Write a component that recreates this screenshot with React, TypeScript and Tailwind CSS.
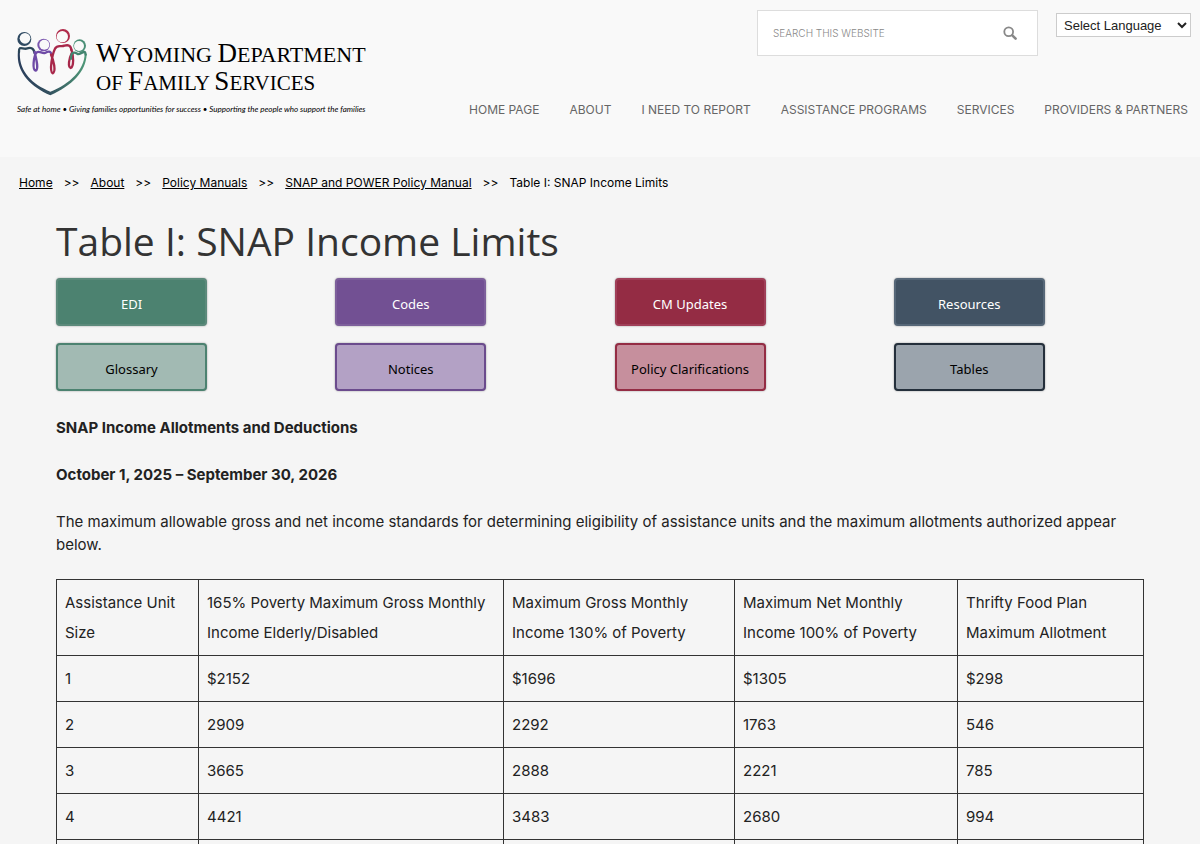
const navLinks = [
  "Home Page",
  "About",
  "I Need To Report",
  "Assistance Programs",
  "Services",
  "Providers & Partners",
];

const breadcrumbs = ["Home", "About", "Policy Manuals", "SNAP and POWER Policy Manual"];

const policyLinks = [
  { label: "EDI", style: "border-[#5c8a7b] bg-[#4c8270] text-white" },
  { label: "Codes", style: "border-[#7d5f9b] bg-[#725093] text-white" },
  { label: "CM Updates", style: "border-[#a03f58] bg-[#942c44] text-white" },
  { label: "Resources", style: "border-[#566778] bg-[#425364] text-white" },
  { label: "Glossary", style: "border-[#4c8270] bg-[#a2bab3] text-black" },
  { label: "Notices", style: "border-[#6b4b8d] bg-[#b3a1c5] text-black" },
  { label: "Policy Clarifications", style: "border-[#942c44] bg-[#c68f9d] text-black" },
  { label: "Tables", style: "border-[#242f3b] bg-[#9ba4ad] text-black" },
];

const columns = [
  { label: "Assistance Unit Size", width: "w-[142px]" },
  { label: "165% Poverty Maximum Gross Monthly Income Elderly/Disabled", width: "w-[305px]" },
  { label: "Maximum Gross Monthly Income 130% of Poverty", width: "w-[231px]" },
  { label: "Maximum Net Monthly Income 100% of Poverty", width: "w-[223px]" },
  { label: "Thrifty Food Plan Maximum Allotment", width: "w-auto" },
];

const rows = [
  ["1", "$2152", "$1696", "$1305", "$298"],
  ["2", "2909", "2292", "1763", "546"],
  ["3", "3665", "2888", "2221", "785"],
  ["4", "4421", "3483", "2680", "994"],
  ["5", "5177", "4079", "3138", "1183"],
];

const LogoMark = () => (
  <svg viewBox="20 26 210 204" className="h-[68px] w-[70px] shrink-0" fill="none" aria-hidden="true">
    <defs>
      <linearGradient id="heart" x1="24" y1="0" x2="228" y2="0" gradientUnits="userSpaceOnUse">
        <stop offset="0" stopColor="#2b3f5c" />
        <stop offset="0.45" stopColor="#33505f" />
        <stop offset="1" stopColor="#4f9a78" />
      </linearGradient>
    </defs>

    {/* heads */}
    <circle cx="42" cy="59" r="21" fill="#2f4a62" />
    <circle cx="44" cy="57" r="16" fill="#f9f9f9" />
    <circle cx="100" cy="77" r="19" fill="#7a55ae" />
    <circle cx="102" cy="76" r="15" fill="#f9f9f9" />
    <circle cx="158" cy="50" r="21" fill="#b02a4a" />
    <circle cx="156" cy="52" r="17" fill="#f9f9f9" />
    <circle cx="208" cy="79" r="19" fill="#4a8f76" />
    <circle cx="206" cy="80" r="15" fill="#f9f9f9" />

    {/* heart outline, heavier toward the point */}
    <path
      d="M23 96C16 156 58 200 120 228C184 200 228 156 229 104L223 104C222 150 180 194 120 217C62 194 24 152 29 96Z"
      fill="url(#heart)"
    />

    {/* shoulders and joined hands */}
    <g strokeWidth="7" strokeLinecap="round" strokeLinejoin="round">
      <path d="M26 98C25 78 36 90 48 88C60 84 70 84 73 102" stroke="#2c4759" />
      <path d="M73 98C78 120 86 150 76 154C65 152 70 112 78 100C88 92 94 104 104 101C114 96 120 94 124 106" stroke="#6f4ba6" />
      <path d="M122 106C130 122 138 158 127 162C116 156 126 104 134 88C142 74 152 84 162 79C174 76 182 78 183 92" stroke="#a8274a" />
      <path d="M183 90C190 108 191 142 181 146C172 142 176 118 184 102" stroke="#a8274a" />
      <path d="M182 118C182 96 192 98 202 104C212 106 224 88 226 106" stroke="#43856f" />
    </g>
  </svg>
);

const SearchIcon = () => (
  <svg viewBox="0 0 14 14" className="size-[14px]" fill="none" stroke="currentColor" aria-hidden="true">
    <circle cx="5.7" cy="5.7" r="4.4" strokeWidth="1.8" />
    <path d="M9.3 9.3L12.6 12.6" strokeWidth="2.6" strokeLinecap="round" />
  </svg>
);

const Header = () => (
  <header className="flex h-[157px] justify-between bg-[#f9f9f9] pr-3">
    <a href="#" className="mt-7 ml-[17px] block text-black">
      <div className="flex">
        <LogoMark />
        <div className="mt-3 ml-[9px] font-['Liberation_Serif',serif] leading-[26px] whitespace-nowrap uppercase">
          <div className="text-[22px]">
            <span className="text-[27px]">W</span>yoming <span className="text-[27px]">D</span>epartment
          </div>
          <div className="text-[21px]">
            of <span className="text-[27px]">F</span>amily <span className="text-[27px]">S</span>ervices
          </div>
        </div>
      </div>
      <p className="mt-[3px] font-['Lato',sans-serif] text-[8px] leading-5 whitespace-nowrap italic">
        Safe at home • Giving families opportunities for success • Supporting the people who support the families
      </p>
    </a>

    <div className="flex flex-col items-end">
      <div className="flex items-start gap-[18px]">
        <form className="mt-[10px] flex h-[46px] w-[281px] items-center border border-[#ddd] bg-white pr-5 pl-[15px]">
          <input
            type="search"
            aria-label="Search this website"
            placeholder="SEARCH THIS WEBSITE"
            className="min-w-0 flex-1 text-[10px] font-light outline-none placeholder:text-[#888]"
          />
          <button type="submit" aria-label="Search" className="text-[#888]">
            <SearchIcon />
          </button>
        </form>
        <select
          aria-label="Select Language"
          className="mt-[13px] -mr-[3px] h-6 w-[135px] border border-[#ccc] bg-white pl-[3px] font-['Liberation_Sans',sans-serif] text-[13px] text-[#222]"
        >
          <option>Select Language</option>
        </select>
      </div>
      <nav className="mt-[44px] flex gap-[30px] text-[12px] leading-5 whitespace-nowrap text-[#666] uppercase">
        {navLinks.map((label) => (
          <a key={label} href="#">
            {label}
          </a>
        ))}
      </nav>
    </div>
  </header>
);

const Breadcrumbs = () => (
  <nav aria-label="Breadcrumb" className="flex px-[19px] pt-4 text-[12px] leading-5 text-black">
    {breadcrumbs.map((label) => (
      <span key={label}>
        <a href="#" className="underline">
          {label}
        </a>
        <span className="mx-[11px]">&gt;&gt;</span>
      </span>
    ))}
    <span>Table I: SNAP Income Limits</span>
  </nav>
);

const IncomeTable = () => (
  <table className="mt-[23px] w-full border-collapse text-left leading-[30px]">
    <thead>
      <tr>
        {columns.map(({ label, width }) => (
          <th key={label} className={`${width} border border-[#333] px-2 pt-2 pb-[7px] align-top font-normal`}>
            {label}
          </th>
        ))}
      </tr>
    </thead>
    <tbody>
      {rows.map((row) => (
        <tr key={row[0]}>
          {row.map((cell, i) => (
            <td key={i} className="border border-[#333] px-2 pt-2 pb-[7px]">
              {cell}
            </td>
          ))}
        </tr>
      ))}
    </tbody>
  </table>
);

const App = () => {
  return (
    <div className="min-h-screen bg-[#f5f5f5] font-['Inter',sans-serif] text-[#222]">
      <Header />
      <Breadcrumbs />

      <main className="px-14 text-[15px] leading-[23px]">
        <h1 className="mt-5 font-['Open_Sans',sans-serif] text-[39px] leading-[56px] text-[#333]">
          Table I: SNAP Income Limits
        </h1>

        <div className="mt-[9px] grid grid-cols-4 gap-x-[29px] gap-y-[17px]">
          {policyLinks.map(({ label, style }) => (
            <a
              key={label}
              href="#"
              className={`flex h-12 w-[151px] items-center justify-center rounded border-2 pt-1 font-['Noto_Sans',sans-serif] text-[13px] shadow-[0_0_2px_#999] ${style}`}
            >
              {label}
            </a>
          ))}
        </div>

        <p className="mt-[25px] font-bold">SNAP Income Allotments and Deductions</p>
        <p className="mt-6 font-bold">October 1, 2025 – September 30, 2026</p>
        <p className="mt-6">
          The maximum allowable gross and net income standards for determining eligibility of assistance units and the
          maximum allotments authorized appear below.
        </p>

        <IncomeTable />
      </main>
    </div>
  );
};

export default App;
